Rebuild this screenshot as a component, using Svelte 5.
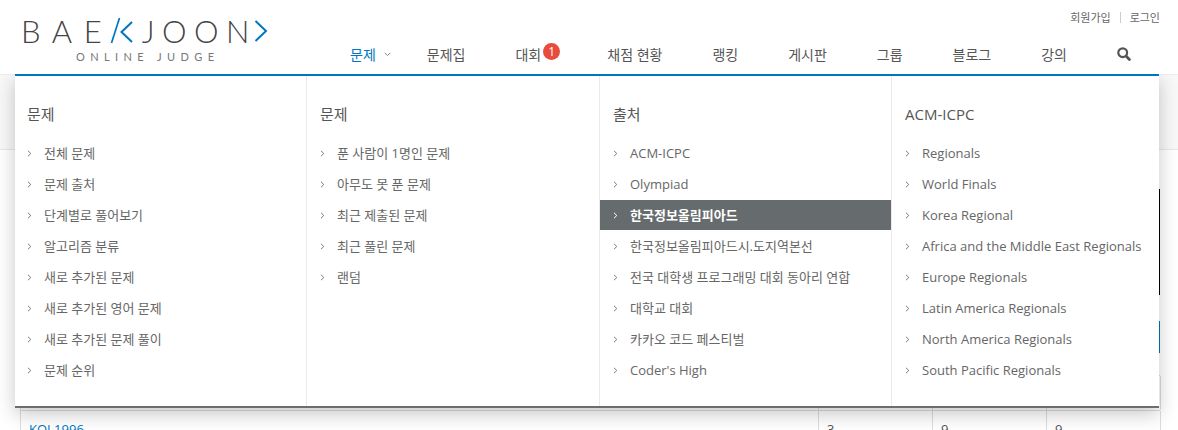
<script>
	const nav = [
		{ label: '문제', active: true },
		{ label: '문제집' },
		{ label: '대회', badge: 1 },
		{ label: '채점 현황' },
		{ label: '랭킹' },
		{ label: '게시판' },
		{ label: '그룹' },
		{ label: '블로그' },
		{ label: '강의' }
	];

	const columns = [
		{
			title: '문제',
			items: ['전체 문제', '문제 출처', '단계별로 풀어보기', '알고리즘 분류', '새로 추가된 문제', '새로 추가된 영어 문제', '새로 추가된 문제 풀이', '문제 순위']
		},
		{
			title: '문제',
			items: ['푼 사람이 1명인 문제', '아무도 못 푼 문제', '최근 제출된 문제', '최근 풀린 문제', '랜덤']
		},
		{
			title: '출처',
			items: ['ACM-ICPC', 'Olympiad', '한국정보올림피아드', '한국정보올림피아드시.도지역본선', '전국 대학생 프로그래밍 대회 동아리 연합', '대학교 대회', '카카오 코드 페스티벌', "Coder's High"]
		},
		{
			title: 'ACM-ICPC',
			items: ['Regionals', 'World Finals', 'Korea Regional', 'Africa and the Middle East Regionals', 'Europe Regionals', 'Latin America Regionals', 'North America Regionals', 'South Pacific Regionals']
		}
	];

	const isKorean = (text) => /[가-힣]/.test(text);
</script>

<div class="page">
	<header>
		<div class="logo">
			<div class="wordmark">
				<span class="bae">BAE</span>
				<svg class="k" width="25" height="28" viewBox="0 0 25 28" fill="none">
					<path d="M9.5 1 L1.5 26" stroke="#0076c0" stroke-width="1.7" />
					<path d="M22 5 L11.5 15 L22 25" stroke="#0076c0" stroke-width="2" />
				</svg>
				<span class="joon">JOON</span>
				<svg class="close" width="14" height="22" viewBox="0 0 14 22" fill="none">
					<path d="M1.5 1 L12 11 L1.5 21" stroke="#0076c0" stroke-width="2" />
				</svg>
			</div>
			<div class="sub">ONLINE JUDGE</div>
		</div>
		<div class="right">
			<div class="user">
				<a href="#join">회원가입</a>
				<i></i>
				<a href="#login">로그인</a>
			</div>
			<nav>
				{#each nav as item}
					<a href="#n" class:active={item.active}>
						{item.label}
						{#if item.active}
							<svg width="7" height="5" viewBox="0 0 7 5" fill="none"><path d="M.7 .8 3.5 3.6 6.3 .8" stroke="#7a8b99" /></svg>
						{/if}
						{#if item.badge}<b>{item.badge}</b>{/if}
					</a>
				{/each}
				<svg class="search" width="14" height="14" viewBox="0 0 14 14" fill="none">
					<circle cx="5.7" cy="5.7" r="4.4" stroke="#555" stroke-width="2.2" />
					<path d="M9 9 L12.4 12.4" stroke="#555" stroke-width="2.8" stroke-linecap="round" />
				</svg>
			</nav>
		</div>
	</header>

	<div class="band"></div>

	<main>
		<div class="rail dark"></div>
		<div class="rail blue"></div>
		<div class="table">
			<div class="row"><span></span><span></span><span></span><span></span></div>
			<div class="row">
				<span><a href="#koi">KOI 1996</a></span><span>3</span><span>9</span><span>9</span>
			</div>
		</div>
	</main>

	<div class="mega">
		{#each columns as col}
			<div class="col">
				<h4>{col.title}</h4>
				<ul>
					{#each col.items as item}
						<li class:on={item === '한국정보올림피아드'}>
							<svg width="5" height="7" viewBox="0 0 5 7" fill="none"><path d="M1 .8 3.8 3.5 1 6.2" stroke="currentColor" /></svg>
							<span class:ko={isKorean(item)}>{item}</span>
						</li>
					{/each}
				</ul>
			</div>
		{/each}
	</div>
</div>

<style>
	:global(body) {
		margin: 0;
		background: #fff;
		font-family: 'Open Sans', 'Noto Sans CJK KR', sans-serif;
		overflow: hidden;
	}
	a {
		color: inherit;
		text-decoration: none;
	}
	.page {
		position: relative;
		height: 430px;
		overflow: hidden;
	}
	header {
		position: relative;
		z-index: 3;
		height: 74px;
		background: #fff;
		display: flex;
		justify-content: space-between;
		padding-left: 24px;
		padding-right: 18px;
	}
	.logo {
		padding-top: 16px;
		color: #444;
	}
	.wordmark {
		display: flex;
		align-items: center;
		height: 30px;
		margin-left: -3px;
		font-family: Lato, sans-serif;
		font-weight: 300;
		font-size: 31px;
		line-height: 30px;
	}
	.bae {
		letter-spacing: 11.5px;
	}
	.joon {
		letter-spacing: 7.5px;
	}
	.k {
		margin-left: -3.5px;
		margin-right: 7px;
	}
	.close {
		margin-left: -3px;
	}
	.sub {
		margin-top: 4px;
		margin-left: 52px;
		font-family: Lato, sans-serif;
		font-size: 11px;
		line-height: 14px;
		letter-spacing: 5.4px;
		color: #777;
		white-space: nowrap;
	}
	.right {
		display: flex;
		flex-direction: column;
		align-items: flex-end;
	}
	.user {
		display: flex;
		align-items: center;
		gap: 9px;
		height: 34px;
		font-size: 11px;
		color: #666;
	}
	.user i {
		width: 1px;
		height: 11px;
		background: #ccc;
	}
	nav {
		display: flex;
		align-items: center;
		height: 40px;
		font-size: 14px;
		color: #555;
		padding-right: 12px;
	}
	nav a {
		display: flex;
		align-items: center;
		gap: 8px;
		padding: 0 25px;
		white-space: nowrap;
	}
	nav a.active {
		color: #0076c0;
		padding-right: 11px;
	}
	nav b {
		width: 17px;
		height: 17px;
		margin: -5px -3px 0 -6px;
		border-radius: 50%;
		background: #e74c3c;
		color: #fff;
		font-size: 12px;
		font-weight: 400;
		line-height: 17px;
		text-align: center;
	}
	.search {
		margin-left: 25px;
		margin-right: 17px;
	}
	.band {
		height: 74px;
		background: #f8f8f8;
		border-top: 1px solid #eee;
		border-bottom: 1px solid #e8e8e8;
	}
	main {
		display: flex;
		flex-direction: column;
		width: 1140px;
		margin-left: 20px;
		padding-top: 39px;
	}
	.rail {
		align-self: flex-end;
		width: 1px;
	}
	.rail.dark {
		height: 106px;
		background: #000;
	}
	.rail.blue {
		height: 32px;
		margin-top: 26px;
		background: #0076c0;
	}
	.table {
		margin-top: 22px;
		font-size: 13px;
		color: #555;
	}
	.row {
		display: grid;
		grid-template-columns: 798px 114px 114px 114px;
		height: 34px;
		border-top: 1px solid #ddd;
		border-left: 1px solid #ddd;
	}
	.row span {
		padding: 9px 8px 0;
		border-right: 1px solid #ddd;
		line-height: 18px;
	}
	.row a {
		color: #0076c0;
	}
	.mega {
		position: absolute;
		z-index: 2;
		top: 74px;
		left: 15px;
		width: 1144px;
		height: 330px;
		display: grid;
		grid-template-columns: 292px 293px 292px 267px;
		background: #fff;
		border-top: 2px solid #0076c0;
		border-bottom: 2px solid #6a6e70;
		box-shadow: 0 6px 18px rgba(0, 0, 0, 0.22);
	}
	.col {
		padding-left: 13px;
		border-right: 1px solid #eaeaea;
	}
	.col:first-child {
		padding-left: 12px;
	}
	.col:last-child {
		border-right: 0;
	}
	h4 {
		margin: 26px 0 0;
		font-size: 15px;
		font-weight: 400;
		line-height: 24px;
		color: #555;
	}
	ul {
		list-style: none;
		margin: 12px 0 0 -13px;
		padding: 0;
	}
	.col:first-child ul {
		margin-left: -12px;
	}
	li {
		display: flex;
		align-items: center;
		height: 30px;
		margin-bottom: 1px;
		padding-left: 13px;
		font-size: 13px;
		color: #666;
		white-space: nowrap;
	}
	.col:first-child li {
		padding-left: 12px;
	}
	li svg {
		margin-right: 12px;
		color: #7a7a7a;
	}
	li .ko {
		margin-bottom: 2px;
	}
	li.on {
		background: #666b6e;
		color: #fff;
		font-weight: 600;
	}
	li.on svg {
		color: #fff;
	}
</style>
